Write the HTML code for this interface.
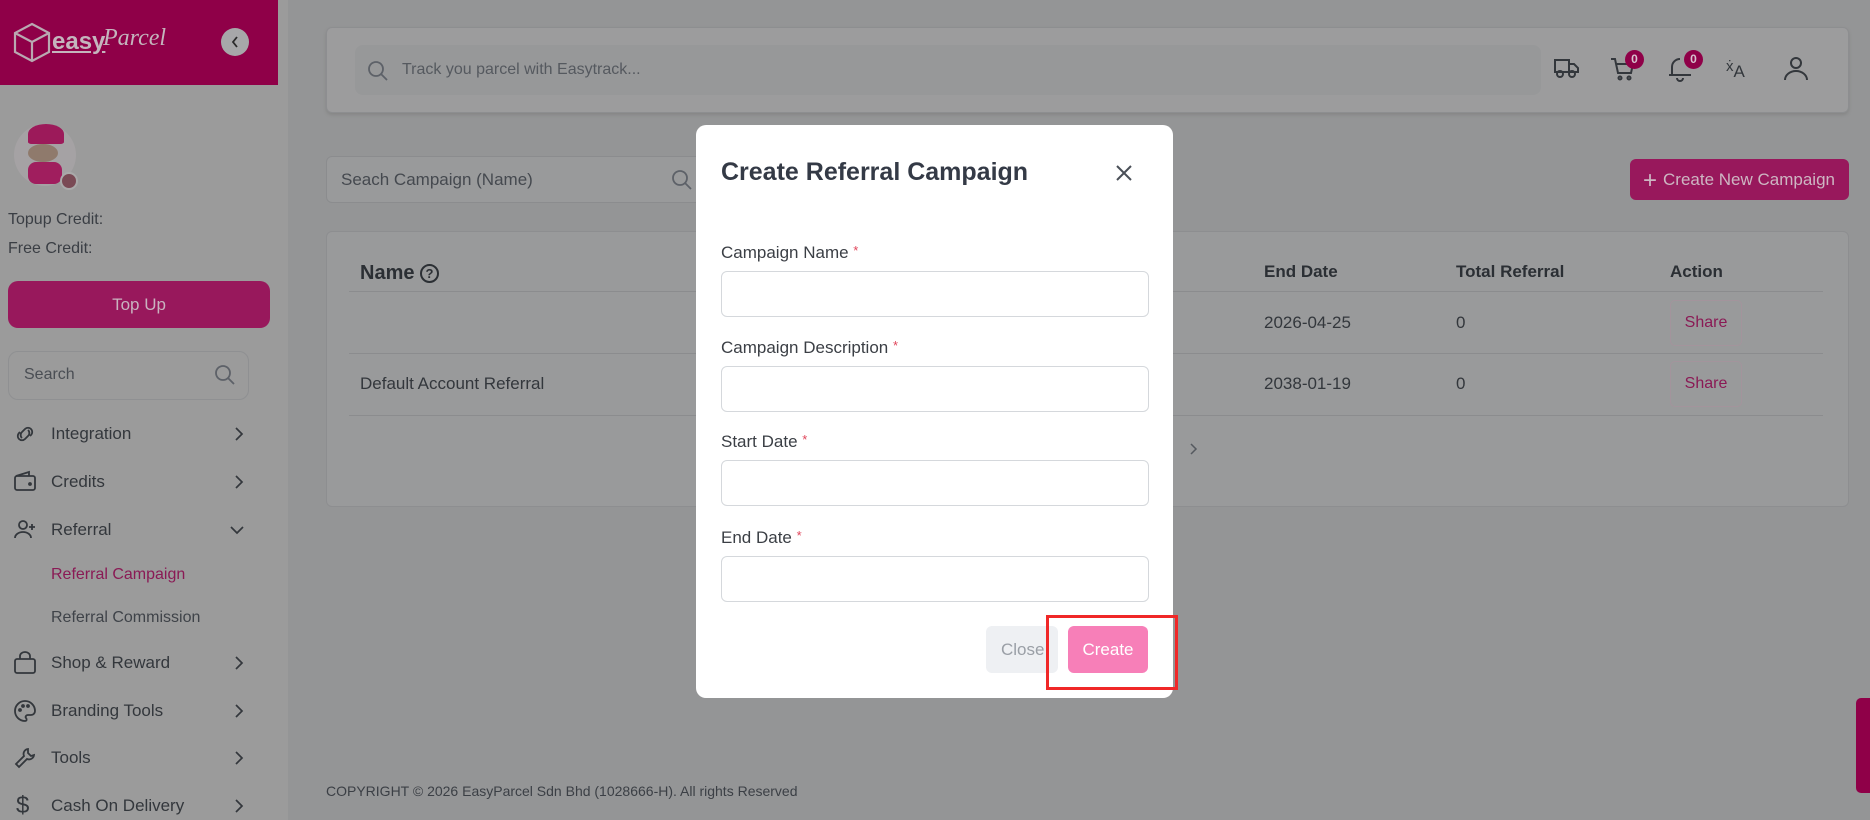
<!DOCTYPE html>
<html><head><meta charset="utf-8"><style>
*{box-sizing:border-box;margin:0;padding:0}
body{width:1870px;height:820px;overflow:hidden;background:#949596;font-family:"Liberation Sans",sans-serif;position:relative;color:#2f3338}
.a{position:absolute}
.sb{left:0;top:0;width:288px;height:820px;background:#9b9b9b}
.ph{left:0;top:0;width:278px;height:85px;background:#8f0048}
.t{color:#3a3e44;font-size:16px}
.mi{position:absolute;left:51px;font-size:17px;color:#33373c}
.chev{position:absolute;left:233px}
.ic{position:absolute;left:13px}
.card{background:#999a9b;border:1px solid #8d8e90;border-radius:6px}
.th{position:absolute;top:262px;font-size:17px;font-weight:bold;color:#2b2f34}
.td{position:absolute;font-size:17px;color:#33373c}
.share{position:absolute;left:1670px;width:72px;height:46px;border:1px solid #a3949c;border-radius:5px;color:#8a1a55;font-size:16px;text-align:center;line-height:44px}
.hl{position:absolute;left:349px;width:1474px;height:1px;background:#8b8c8e}
.modal{left:696px;top:125px;width:477px;height:573px;background:#fff;border-radius:10px}
.lbl{position:absolute;left:25px;font-size:17px;color:#3b3f45}
.lbl b{color:#e0455a;font-weight:normal;font-size:13px;vertical-align:top}
.inp{position:absolute;left:25px;width:428px;height:46px;border:1px solid #d5d8dc;border-radius:6px}
</style></head><body>
<div class="a sb"></div>
<div class="a ph"></div>
<svg class="a" style="left:12px;top:22px" width="40" height="42" viewBox="0 0 40 42" fill="none" stroke="#b9a9b1" stroke-width="2.2"><path d="M20 2 L37 11 V30 L20 39 L3 30 V11 Z M3 11 L20 20 L37 11 M20 20 V39"/></svg>
<div class="a" style="left:52px;top:28px;color:#c4b5bd;font-size:24px;font-weight:bold;text-decoration:underline">easy</div>
<div class="a" style="left:103px;top:25px;color:#c4b5bd;font-size:24px;font-style:italic;font-family:'Liberation Serif',serif">Parcel</div>
<div class="a" style="left:221px;top:28px;width:28px;height:28px;border-radius:50%;background:#a7a7a9"></div>
<svg class="a" style="left:230px;top:35px" width="10" height="14" fill="none" stroke="#2b2b2b" stroke-width="1.8"><path d="M7 2L3 7l4 5"/></svg>
<div class="a" style="left:14px;top:124px;width:62px;height:62px;border-radius:50%;background:#a5a2a4"></div>
<div class="a" style="left:28px;top:124px;width:36px;height:20px;border-radius:50% 50% 10% 10%;background:#9c1a5a"></div>
<div class="a" style="left:28px;top:144px;width:30px;height:18px;border-radius:50%;background:#8f7a6c"></div>
<div class="a" style="left:28px;top:162px;width:34px;height:22px;border-radius:8px;background:#a01e5e"></div>
<div class="a" style="left:60px;top:172px;width:18px;height:18px;border-radius:50%;background:#7a4a55;border:2px solid #aaa"></div>
<div class="a t" style="left:8px;top:211px;font-size:16px">Topup Credit:</div>
<div class="a t" style="left:8px;top:240px;font-size:16px">Free Credit:</div>
<div class="a" style="left:8px;top:281px;width:262px;height:47px;border-radius:10px;background:#98185c;color:#c9b3bf;font-size:17px;text-align:center;line-height:47px">Top Up</div>
<div class="a" style="left:8px;top:351px;width:241px;height:49px;border:1px solid #8f9092;border-radius:10px"></div>
<div class="a" style="left:24px;top:366px;font-size:16px;color:#4a4e54">Search</div>
<svg class="a" style="left:214px;top:364px" width="22" height="22" fill="none" stroke="#5d6168" stroke-width="1.8"><circle cx="9" cy="9" r="7"/><path d="M14 14l6 6"/></svg>

<svg class="ic" style="top:424px" width="24" height="20" fill="none" stroke="#33373c" stroke-width="1.8"><path d="M9 14a4 4 0 0 1 0-6l3-3a4 4 0 0 1 6 6l-1 1M15 6a4 4 0 0 1 0 6l-3 3a4 4 0 0 1-6-6l1-1"/></svg>
<div class="mi" style="top:424px">Integration</div>
<svg class="chev" style="top:426px" width="12" height="16" fill="none" stroke="#33373c" stroke-width="1.7"><path d="M3 2l6 6-6 6"/></svg>
<svg class="ic" style="top:470px" width="24" height="22" fill="none" stroke="#33373c" stroke-width="1.8"><rect x="2" y="6" width="20" height="14" rx="2"/><path d="M3 6l13-4v4"/><circle cx="17" cy="14" r="1"/></svg>
<div class="mi" style="top:472px">Credits</div>
<svg class="chev" style="top:474px" width="12" height="16" fill="none" stroke="#33373c" stroke-width="1.7"><path d="M3 2l6 6-6 6"/></svg>
<svg class="ic" style="top:518px" width="24" height="22" fill="none" stroke="#33373c" stroke-width="1.8"><circle cx="10" cy="7" r="4"/><path d="M2 20a8 6 0 0 1 16 0M19 6v6M16 9h6"/></svg>
<div class="mi" style="top:520px">Referral</div>
<svg class="chev" style="top:524px;left:229px" width="16" height="12" fill="none" stroke="#33373c" stroke-width="1.7"><path d="M2 3l6 6 6-6"/></svg>
<div class="mi" style="top:566px;color:#8a1a55;font-size:16px">Referral Campaign</div>
<div class="mi" style="top:609px;color:#3f4349;font-size:16px">Referral Commission</div>
<svg class="ic" style="top:651px" width="24" height="24" fill="none" stroke="#33373c" stroke-width="1.8"><rect x="2" y="8" width="20" height="14" rx="2"/><path d="M7 8V5a5 4 0 0 1 10 0v3"/></svg>
<div class="mi" style="top:653px">Shop &amp; Reward</div>
<svg class="chev" style="top:655px" width="12" height="16" fill="none" stroke="#33373c" stroke-width="1.7"><path d="M3 2l6 6-6 6"/></svg>
<svg class="ic" style="top:699px" width="24" height="24" fill="none" stroke="#33373c" stroke-width="1.8"><path d="M12 2a10 10 0 0 0 0 20c2 0 2-2 1-3s0-3 2-3h3a4 4 0 0 0 4-4A10 10 0 0 0 12 2z"/><circle cx="7" cy="11" r="1"/><circle cx="10" cy="7" r="1"/><circle cx="15" cy="7" r="1"/></svg>
<div class="mi" style="top:701px">Branding Tools</div>
<svg class="chev" style="top:703px" width="12" height="16" fill="none" stroke="#33373c" stroke-width="1.7"><path d="M3 2l6 6-6 6"/></svg>
<svg class="ic" style="top:746px" width="24" height="24" fill="none" stroke="#33373c" stroke-width="1.8"><path d="M15 3a5 5 0 0 0-4 7L3 18l3 3 8-8a5 5 0 0 0 7-4l-3 1-3-3z"/></svg>
<div class="mi" style="top:748px">Tools</div>
<svg class="chev" style="top:750px" width="12" height="16" fill="none" stroke="#33373c" stroke-width="1.7"><path d="M3 2l6 6-6 6"/></svg>
<div class="a" style="left:16px;top:792px;font-size:24px;color:#33373c">$</div>
<div class="mi" style="top:796px">Cash On Delivery</div>
<svg class="chev" style="top:798px" width="12" height="16" fill="none" stroke="#33373c" stroke-width="1.7"><path d="M3 2l6 6-6 6"/></svg>

<div class="a card" style="left:326px;top:27px;width:1523px;height:86px;background:#9c9c9d;box-shadow:0 2px 3px #868686"></div>
<div class="a" style="left:355px;top:45px;width:1186px;height:50px;border-radius:8px;background:#979899"></div>
<svg class="a" style="left:367px;top:60px" width="22" height="22" fill="none" stroke="#5d6168" stroke-width="1.8"><circle cx="9" cy="9" r="7"/><path d="M14 14l6 6"/></svg>
<div class="a" style="left:402px;top:61px;font-size:16px;color:#55595f">Track you parcel with Easytrack...</div>
<svg class="a" style="left:1553px;top:56px" width="28" height="24" fill="none" stroke="#33373c" stroke-width="2"><path d="M2 4h14v12H2zM16 8h5l4 4v4h-9"/><circle cx="7" cy="18" r="3"/><circle cx="19" cy="18" r="3"/></svg>
<svg class="a" style="left:1610px;top:56px" width="26" height="26" fill="none" stroke="#33373c" stroke-width="2"><path d="M1 3h4l3 14h13l2-9H7"/><circle cx="10" cy="22" r="1.5"/><circle cx="19" cy="22" r="1.5"/></svg>
<div class="a" style="left:1625px;top:50px;width:19px;height:19px;border-radius:50%;background:#8f0048;color:#d8c2cf;font-size:12px;font-weight:bold;text-align:center;line-height:19px">0</div>
<svg class="a" style="left:1667px;top:56px" width="26" height="26" fill="none" stroke="#33373c" stroke-width="2"><path d="M5 19V11a8 8 0 0 1 8-8M2 19h22M10 22a3 3 0 0 0 6 0"/></svg>
<div class="a" style="left:1684px;top:50px;width:19px;height:19px;border-radius:50%;background:#8f0048;color:#d8c2cf;font-size:12px;font-weight:bold;text-align:center;line-height:19px">0</div>
<div class="a" style="left:1726px;top:56px;font-size:15px;color:#33373c">x&#775;<span style="font-size:17px;position:relative;top:6px">A</span></div>
<svg class="a" style="left:1783px;top:56px" width="26" height="26" fill="none" stroke="#33373c" stroke-width="2"><circle cx="13" cy="7" r="5"/><path d="M2 24a11 9 0 0 1 22 0"/></svg>

<div class="a" style="left:326px;top:156px;width:400px;height:47px;border:1px solid #8b8c8e;border-radius:6px;background:#999a9b"></div>
<div class="a" style="left:341px;top:170px;font-size:17px;color:#45494f">Seach Campaign (Name)</div>
<svg class="a" style="left:671px;top:169px" width="22" height="22" fill="none" stroke="#5d6168" stroke-width="1.8"><circle cx="9" cy="9" r="7"/><path d="M14 14l6 6"/></svg>
<div class="a" style="left:1630px;top:159px;width:219px;height:41px;border-radius:6px;background:#98185c;color:#cdb6c2;font-size:17px;line-height:41px;padding-left:13px"><span style="font-size:24px;vertical-align:-3px;margin-right:6px">+</span>Create New Campaign</div>

<div class="a card" style="left:326px;top:231px;width:1523px;height:276px"></div>
<div class="th" style="left:360px;font-size:20px">Name <span style="display:inline-block;width:19px;height:19px;border:2px solid #2b2f34;border-radius:50%;font-size:13px;text-align:center;line-height:15px;vertical-align:1px">?</span></div>
<div class="th" style="left:1264px">End Date</div>
<div class="th" style="left:1456px">Total Referral</div>
<div class="th" style="left:1670px">Action</div>
<div class="hl" style="top:291px"></div>
<div class="td" style="left:1264px;top:313px">2026-04-25</div>
<div class="td" style="left:1456px;top:313px">0</div>
<div class="share" style="top:300px">Share</div>
<div class="hl" style="top:353px"></div>
<div class="td" style="left:360px;top:374px">Default Account Referral</div>
<div class="td" style="left:1264px;top:374px">2038-01-19</div>
<div class="td" style="left:1456px;top:374px">0</div>
<div class="share" style="top:361px">Share</div>
<div class="hl" style="top:415px"></div>
<svg class="a" style="left:1188px;top:442px" width="10" height="14" fill="none" stroke="#55595f" stroke-width="1.5"><path d="M3 2l5 5-5 5"/></svg>

<div class="a" style="left:326px;top:783px;font-size:14px;color:#3b3f45">COPYRIGHT © 2026 EasyParcel Sdn Bhd (1028666-H). All rights Reserved</div>
<div class="a" style="left:1856px;top:698px;width:20px;height:95px;border-radius:5px;background:#8f0048"></div>

<div class="a modal">
<div class="a" style="left:25px;top:33px;font-size:25px;font-weight:bold;color:#343a46">Create Referral Campaign</div>
<svg class="a" style="left:418px;top:38px" width="20" height="20" stroke="#4a4f57" stroke-width="2"><path d="M3 3l14 14M17 3L3 17"/></svg>
<div class="lbl" style="top:118px">Campaign Name <b>*</b></div>
<div class="inp" style="top:146px"></div>
<div class="lbl" style="top:213px">Campaign Description <b>*</b></div>
<div class="inp" style="top:241px"></div>
<div class="lbl" style="top:307px">Start Date <b>*</b></div>
<div class="inp" style="top:335px"></div>
<div class="lbl" style="top:403px">End Date <b>*</b></div>
<div class="inp" style="top:431px"></div>
<div class="a" style="left:290px;top:501px;width:72px;height:47px;border-radius:6px;background:#eef0f3;color:#9a9fa6;font-size:17px;line-height:47px;padding-left:15px">Close</div>
<div class="a" style="left:372px;top:501px;width:80px;height:47px;border-radius:6px;background:#f77fb8;color:#fff;font-size:17px;line-height:47px;text-align:center">Create</div>
<div class="a" style="left:350px;top:490px;width:132px;height:75px;border:3px solid #f02828"></div>
</div>
</body></html>
